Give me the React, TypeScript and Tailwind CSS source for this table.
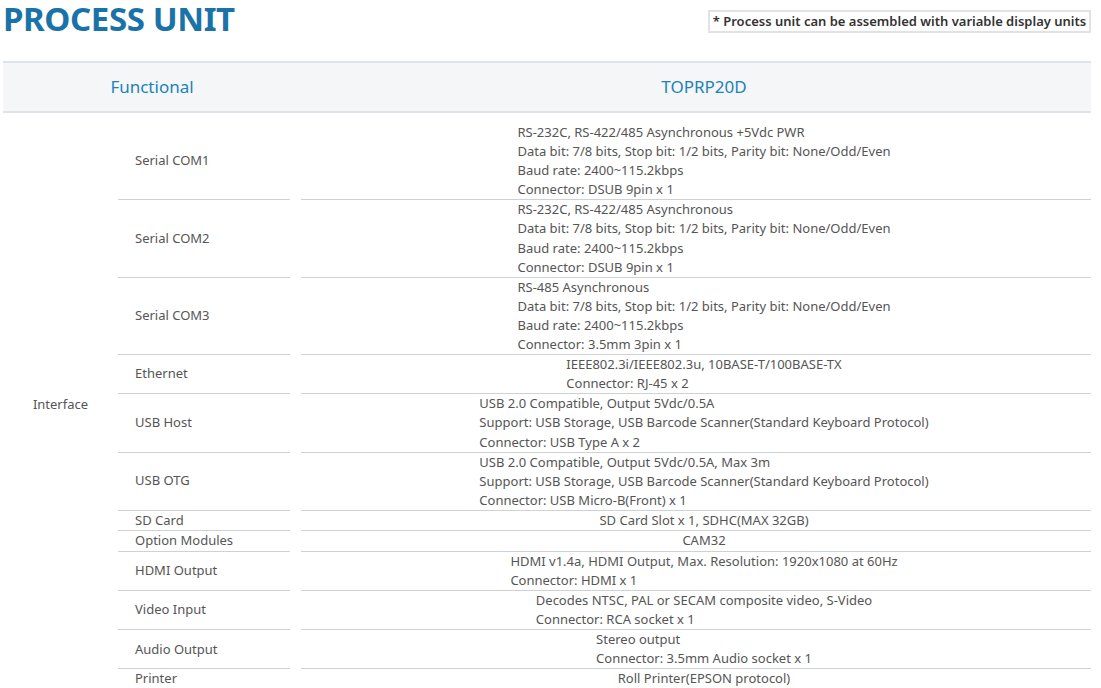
const rows: { label: string; lines: string[]; first?: boolean }[] = [
  {
    label: "Serial COM1",
    first: true,
    lines: [
      "RS-232C, RS-422/485 Asynchronous +5Vdc PWR",
      "Data bit: 7/8 bits, Stop bit: 1/2 bits, Parity bit: None/Odd/Even",
      "Baud rate: 2400~115.2kbps",
      "Connector: DSUB 9pin x 1",
    ],
  },
  {
    label: "Serial COM2",
    lines: [
      "RS-232C, RS-422/485 Asynchronous",
      "Data bit: 7/8 bits, Stop bit: 1/2 bits, Parity bit: None/Odd/Even",
      "Baud rate: 2400~115.2kbps",
      "Connector: DSUB 9pin x 1",
    ],
  },
  {
    label: "Serial COM3",
    lines: [
      "RS-485 Asynchronous",
      "Data bit: 7/8 bits, Stop bit: 1/2 bits, Parity bit: None/Odd/Even",
      "Baud rate: 2400~115.2kbps",
      "Connector: 3.5mm 3pin x 1",
    ],
  },
  {
    label: "Ethernet",
    lines: ["IEEE802.3i/IEEE802.3u, 10BASE-T/100BASE-TX", "Connector: RJ-45 x 2"],
  },
  {
    label: "USB Host",
    lines: [
      "USB 2.0 Compatible, Output 5Vdc/0.5A",
      "Support: USB Storage, USB Barcode Scanner(Standard Keyboard Protocol)",
      "Connector: USB Type A x 2",
    ],
  },
  {
    label: "USB OTG",
    lines: [
      "USB 2.0 Compatible, Output 5Vdc/0.5A, Max 3m",
      "Support: USB Storage, USB Barcode Scanner(Standard Keyboard Protocol)",
      "Connector: USB Micro-B(Front) x 1",
    ],
  },
  { label: "SD Card", lines: ["SD Card Slot x 1, SDHC(MAX 32GB)"] },
  { label: "Option Modules", lines: ["CAM32"] },
  {
    label: "HDMI Output",
    lines: [
      "HDMI v1.4a, HDMI Output, Max. Resolution: 1920x1080 at 60Hz",
      "Connector: HDMI x 1",
    ],
  },
  {
    label: "Video Input",
    lines: [
      "Decodes NTSC, PAL or SECAM composite video, S-Video",
      "Connector: RCA socket x 1",
    ],
  },
  {
    label: "Audio Output",
    lines: ["Stereo output", "Connector: 3.5mm Audio socket x 1"],
  },
  { label: "Printer", lines: ["Roll Printer(EPSON protocol)"] },
];

function SpecRow({ label, lines, first }: { label: string; lines: string[]; first?: boolean }) {
  return (
    <div className={first ? "flex pt-[10px]" : "flex"}>
      <div className="w-[172px] flex items-center pl-[17px] border-b border-[#cfd2d5]">
        {label}
      </div>
      <div className="w-[11px]" />
      <div className="flex-1 pl-4 flex justify-center border-b border-[#cfd2d5]">
        <div className="text-left">
          {lines.map((l, i) => (
            <div key={i} className="h-[19.1px] leading-[19.1px] whitespace-nowrap">
              {l}
            </div>
          ))}
        </div>
      </div>
    </div>
  );
}

export default function App() {
  return (
    <div
      className="w-[1101px] h-[688px] overflow-hidden bg-white text-[#555] text-[13px]"
      style={{ fontFamily: '"Noto Sans", "Open Sans", sans-serif' }}
    >
      <div className="h-[61px] flex justify-between items-start">
        <h1 className="pl-[3px] text-[33px] leading-[38px] font-bold text-[#1a73a8] tracking-[-0.4px]">
          PROCESS UNIT
        </h1>
        <div className="mt-[10px] mr-[10px] h-[23px] w-[383px] border-2 border-[#dfe3e7] flex items-center justify-center text-[13px] font-semibold text-[#333]">
          * Process unit can be assembled with variable display units
        </div>
      </div>

      <div className="ml-[3px] mr-[10px]">
        <div className="h-[52px] flex border-y-2 border-[#dde3e9] bg-[#f4f6f8] text-[17px] text-[#1d82b9]">
          <div className="w-[298px] flex items-center justify-center">Functional</div>
          <div className="flex-1 pl-4 flex items-center justify-center">TOPRP20D</div>
        </div>

        <div className="flex">
          <div className="w-[115px] flex items-center justify-center pt-[6px]">Interface</div>
          <div className="flex-1">
            {rows.map((r) => (
              <SpecRow key={r.label} {...r} />
            ))}
          </div>
        </div>
      </div>
    </div>
  );
}
